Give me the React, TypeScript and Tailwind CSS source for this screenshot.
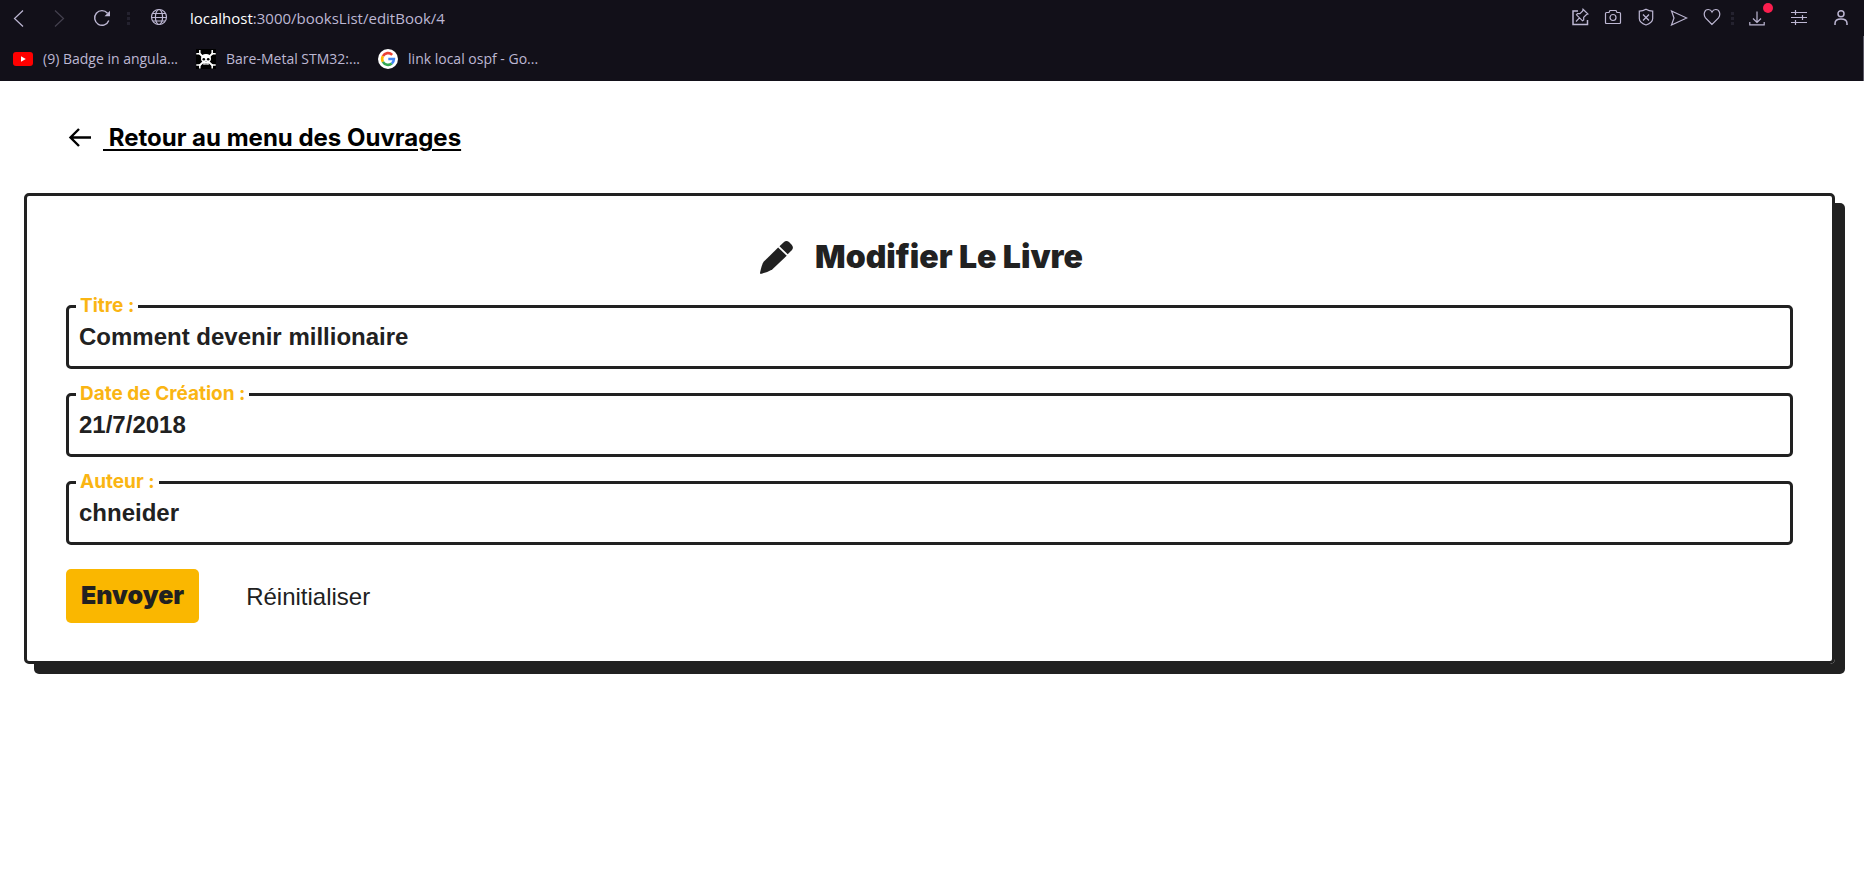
import { useState } from "react";
import type { ReactNode } from "react";

function IconButton({ label, className, children }: { label: string; className: string; children: ReactNode }) {
  return (
    <button type="button" aria-label={label} className={`flex h-8 shrink-0 items-center justify-center ${className}`}>
      {children}
    </button>
  );
}

function Dots() {
  return (
    <span className="flex w-2 shrink-0 flex-col items-center gap-[2px]">
      <span className="size-[3px] bg-[#24222f]" />
      <span className="size-[3px] bg-[#24222f]" />
      <span className="size-[3px] bg-[#24222f]" />
    </span>
  );
}

const line = { fill: "none", stroke: "currentColor", strokeWidth: 1.2 } as const;

function AddressBar() {
  return (
    <div className="flex h-9 items-center pr-[2px]">
      <IconButton label="Précédent" className="w-[38px]">
        <svg width="18" height="18" viewBox="0 0 18 18" {...line}>
          <path d="M13 1.500 4.500 9.500 13 17.500" />
        </svg>
      </IconButton>
      <IconButton label="Suivant" className="w-[42px] text-[#44414f]">
        <svg width="18" height="18" viewBox="0 0 18 18" {...line}>
          <path d="M5 1.500 13.500 9.500 5 17.500" />
        </svg>
      </IconButton>
      <IconButton label="Actualiser" className="w-11">
        <svg width="18" height="18" viewBox="0 0 18 18" {...line} strokeWidth={1.4}>
          <path d="M15.800 11.500A7.300 7.300 0 1 1 14.500 4.200" />
          <path d="M17 1.800V7.300H11.500Z" fill="currentColor" stroke="none" />
        </svg>
      </IconButton>
      <Dots />
      <IconButton label="Informations du site" className="w-[54px] pb-[2px]">
        <svg width="18" height="18" viewBox="0 0 18 18" {...line}>
          <circle cx="9" cy="9" r="7.500" />
          <ellipse cx="9" cy="9" rx="3.600" ry="7.500" />
          <path d="M2.500 5.500H15.500M1.500 9.500H16.500M2.800 13H15.200" />
        </svg>
      </IconButton>
      <p className="grow pl-1 font-['Open_Sans','Noto_Sans',sans-serif] text-[15px] leading-5">
        <span className="text-white">localhost</span>:3000/booksList/editBook/4
      </p>
      <div className="flex gap-px pb-[2px]">
        <IconButton label="Épingler" className="w-8">
          <svg width="18" height="18" viewBox="0 0 18 18" {...line}>
            <path d="M7 3H2V16.500H16.500V12" strokeWidth="1.500" />
            <path d="M12 1.200 17 6 15.500 6.500 12.700 9.300V12L11.500 12.800 5.500 6.800 6.500 5.700H9L11.700 3ZM8.500 9.800 5 13.500" />
          </svg>
        </IconButton>
        <IconButton label="Capture" className="w-8">
          <svg width="18" height="18" viewBox="0 0 18 18" {...line}>
            <path d="M2.500 4.500H5L6 2.500H12L13 4.500H15.500Q16.500 4.500 16.500 5.500V14.500Q16.500 15.500 15.500 15.500H2.500Q1.500 15.500 1.500 14.500V5.500Q1.500 4.500 2.500 4.500Z" />
            <circle cx="9" cy="9.500" r="3" />
          </svg>
        </IconButton>
        <IconButton label="Bloqueur" className="w-8">
          <svg width="18" height="18" viewBox="0 0 18 18" {...line}>
            <path d="M9 1.300Q12 3.200 15.700 3.200V10.500Q15.700 14.500 9 17 2.300 14.500 2.300 10.500V3.200Q6 3.200 9 1.300Z" />
            <path d="M6 6.500 12 12.500M12 6.500 6 12.500" />
          </svg>
        </IconButton>
        <IconButton label="Envoyer la page" className="w-8">
          <svg width="18" height="18" viewBox="0 0 18 18" {...line}>
            <path d="M1.500 3 16.800 10 1.500 17 4 10Z" />
          </svg>
        </IconButton>
        <IconButton label="Favoris" className="w-8 pr-px">
          <svg width="18" height="18" viewBox="0 0 18 18" {...line}>
            <path d="M9 16.500 2.500 9.800C0 6.500 1.500 1.500 5.200 1.500 7.500 1.500 8.500 2.900 9 4 9.500 2.900 10.500 1.500 12.800 1.500 16.500 1.500 18 6.500 15.500 9.800Z" />
          </svg>
        </IconButton>
      </div>
      <Dots />
      <IconButton label="Téléchargements" className="relative w-[42px]">
        <svg width="18" height="18" viewBox="0 0 18 18" {...line}>
          <path d="M9 2.500V13M5 9.500 9 13.500 13 9.500M1.800 13V15.800H16.200V13" />
        </svg>
        <span className="absolute top-[1px] right-[5px] size-[10px] rounded-full bg-[#fa1e4e]" />
      </IconButton>
      <IconButton label="Configuration" className="w-[42px]">
        <svg width="18" height="18" viewBox="0 0 18 18" {...line}>
          <path d="M1 3.500H17M1 8.500H17M1 13.500H17M5.500 1V6M12.500 6V11M5.500 11V16" />
        </svg>
      </IconButton>
      <IconButton label="Profil" className="w-[42px]">
        <svg width="18" height="18" viewBox="0 0 18 18" {...line} strokeWidth={1.500}>
          <circle cx="9" cy="4.700" r="3" />
          <path d="M3 16V14.500Q3 10 9 10 15 10 15 14.500V16" />
        </svg>
      </IconButton>
    </div>
  );
}

function Bookmark({ icon, children }: { icon: ReactNode; children: ReactNode }) {
  return (
    <a href="#" className="flex items-center gap-[10px] whitespace-nowrap">
      {icon}
      {children}
    </a>
  );
}

function Bookmarks() {
  return (
    <nav className="flex h-[45px] items-center gap-[18px] border-r border-[#5b5966] pl-[13px] font-['Open_Sans','Noto_Sans',sans-serif] text-[14px] leading-5">
      <Bookmark
        icon={
          <svg width="20" height="20" viewBox="0 0 20 20">
            <rect y="3" width="20" height="14" rx="3" fill="#f00" />
            <path d="M8 7.200V12.800L12.800 10Z" fill="#fff" />
          </svg>
        }
      >
        (9) Badge in angula...
      </Bookmark>
      <Bookmark
        icon={
          <svg width="20" height="20" viewBox="0 0 20 20">
            <rect width="20" height="20" fill="#000" />
            <g stroke="#fff" strokeWidth="1.800" fill="none">
              <path d="M3.500 4.500 16.500 16.500M16.500 4.500 3.500 16.500" />
              <path d="M3.800 1V4.800H.3M16.200 1V4.800H19.700M3.800 19.500V16H.3M16.200 19.500V16H19.700" strokeWidth="1.500" />
            </g>
            <path d="M10 5C13.300 5 15 7 15 9.800 15 11.500 14 12.700 12.700 13.200V15.800H7.300V13.200C6 12.700 5 11.500 5 9.800 5 7 6.700 5 10 5Z" fill="#fff" />
            <circle cx="7.800" cy="10.300" r="1.300" />
            <circle cx="12.200" cy="10.300" r="1.300" />
            <path d="M9.500 12.800 10 11.800 10.500 12.800ZM8.800 14V16H9.300V14ZM10.700 14V16H11.200V14Z" />
          </svg>
        }
      >
        Bare-Metal STM32:...
      </Bookmark>
      <Bookmark
        icon={
          <svg width="20" height="20" viewBox="0 0 20 20">
            <circle cx="10" cy="10" r="10" fill="#fff" />
            <g fill="none" strokeWidth="2.600">
              <path d="M14.200 5.800A5.900 5.900 0 0 0 4.900 7.100" stroke="#ea4335" />
              <path d="M4.900 7.100A5.900 5.900 0 0 0 4.900 12.900" stroke="#fbbc05" />
              <path d="M4.900 12.900A5.900 5.900 0 0 0 13.800 14.500" stroke="#34a853" />
              <path d="M13.800 14.500A5.900 5.900 0 0 0 15.900 10H10.300" stroke="#4285f4" />
            </g>
          </svg>
        }
      >
        link local ospf - Go...
      </Bookmark>
    </nav>
  );
}

function Field({ id, label, value, onChange }: { id: string; label: string; value: string; onChange: (v: string) => void }) {
  return (
    <div className="relative">
      <label
        htmlFor={id}
        className="absolute -top-[11px] left-[10px] bg-white px-1 font-['Inter',sans-serif] text-[19px] leading-6 font-bold text-[#fab513]"
      >
        {label}
      </label>
      <input
        id={id}
        type="text"
        value={value}
        onChange={(e) => onChange(e.target.value)}
        className="block h-16 w-full rounded-[5px] border-[3px] border-[#212121] bg-white px-[10px] font-['Liberation_Sans',sans-serif] text-[24px] font-bold text-[#212121] outline-none"
      />
    </div>
  );
}

const initial = { titre: "Comment devenir millionaire", date: "21/7/2018", auteur: "chneider" };

export default function App() {
  const [book, setBook] = useState(initial);

  return (
    <div className="min-h-screen bg-white">
      <header className="bg-[#121019] text-[#bdb7d3]">
        <AddressBar />
        <Bookmarks />
      </header>

      <main className="pt-[37px] pr-[29px] pb-12 pl-6 font-['Inter',sans-serif]">
        <a href="#" className="ml-[42px] inline-flex items-center gap-[9px] text-[24px] leading-10 font-bold text-black">
          <svg width="28" height="28" viewBox="0 0 28 28" fill="none" stroke="currentColor" strokeWidth="2.400">
            <path d="M25 13.500H5M13 5 4.500 13.500 13 22" />
          </svg>
          <span className="whitespace-pre underline decoration-2 underline-offset-3"> Retour au menu des Ouvrages</span>
        </a>

        <form
          onSubmit={(e) => e.preventDefault()}
          className="mt-[35px] flex flex-col gap-6 rounded-[5px] border-[3px] border-[#212121] px-[39px] pt-9 pb-[38px] shadow-[10px_10px_0_#212121]"
        >
          <h1 className="flex items-center justify-center gap-[22px] pt-px pr-4 text-[32px] leading-[48px] font-black text-[#212121]">
            <svg width="33" height="33" viewBox="0 0 100 100" fill="currentColor">
              <path d="M59 16 72 4Q79-3 88 3L96 11Q103 19 97 27L84 40Z" />
              <path d="M55 20 81 45 37 86Q24 94 2 100 0 99 0 97 5 72 11 63Z" />
            </svg>
            Modifier Le Livre
          </h1>
          <Field id="titre" label="Titre :" value={book.titre} onChange={(titre) => setBook({ ...book, titre })} />
          <Field id="date" label="Date de Création :" value={book.date} onChange={(date) => setBook({ ...book, date })} />
          <Field id="auteur" label="Auteur :" value={book.auteur} onChange={(auteur) => setBook({ ...book, auteur })} />
          <div className="flex items-center gap-[31px]">
            <button type="submit" className="h-[54px] rounded-[5px] bg-[#fab700] px-[15px] text-[25px] font-black text-[#212121]">
              Envoyer
            </button>
            <button
              type="button"
              onClick={() => setBook(initial)}
              className="h-[54px] px-4 pt-[2px] font-['Liberation_Sans',sans-serif] text-[24px] text-[#212121]"
            >
              Réinitialiser
            </button>
          </div>
        </form>
      </main>
    </div>
  );
}
